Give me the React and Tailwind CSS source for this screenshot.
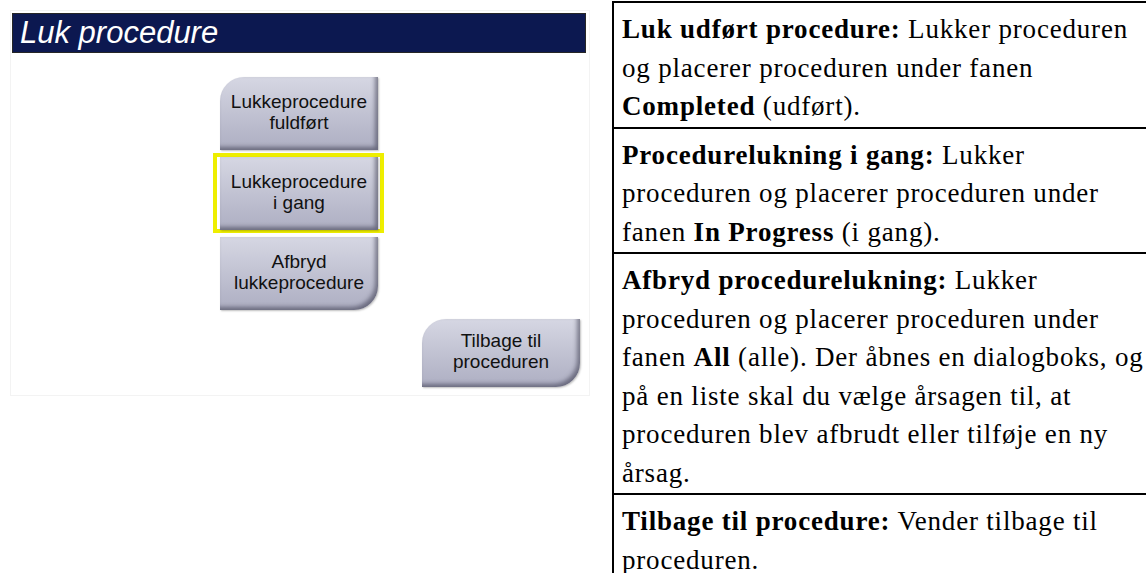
import React from "react";

const sans = { fontFamily: '"Liberation Sans", Arial, sans-serif' };
const serif = { fontFamily: '"Liberation Serif", "Times New Roman", serif' };

// grey-lilac console button, the corner that is rounded varies per button
const ProcButton = ({ lines, rounded, h = "h-[73px]" }) => (
  <div
    className={`w-[158px] ${h} flex flex-col items-center justify-center pb-[4px] bg-gradient-to-b from-[#d6d7e3] to-[#adaec2] shadow-[inset_-3px_-3px_4px_rgba(40,40,60,0.5),1px_1px_2px_rgba(0,0,0,0.25)] text-[19px] leading-[21px] text-[#111111] text-center ${rounded}`}
    style={sans}
  >
    {lines.map((l) => (
      <div key={l}>{l}</div>
    ))}
  </div>
);

const rows = [
  [
    [<b key="a">Luk udført procedure:</b>, " Lukker proceduren"],
    ["og placerer proceduren under fanen"],
    [<b key="a">Completed</b>, " (udført)."],
  ],
  [
    [<b key="a">Procedurelukning i gang:</b>, " Lukker"],
    ["proceduren og placerer proceduren under"],
    ["fanen ", <b key="a">In Progress</b>, " (i gang)."],
  ],
  [
    [<b key="a">Afbryd procedurelukning:</b>, " Lukker"],
    ["proceduren og placerer proceduren under"],
    ["fanen ", <b key="a">All</b>, " (alle). Der åbnes en dialogboks, og"],
    ["på en liste skal du vælge årsagen til, at"],
    ["proceduren blev afbrudt eller tilføje en ny"],
    ["årsag."],
  ],
  [
    [<b key="a">Tilbage til procedure:</b>, " Vender tilbage til"],
    ["proceduren."],
  ],
];

export default function App() {
  return (
    <div className="w-[1146px] h-[573px] bg-white overflow-hidden flex">
      {/* left: screen capture */}
      <div className="w-[612px] shrink-0 pt-[10px] pl-[10px]">
        <div className="w-[580px] h-[386px] border border-[#f3f3f3] pt-[2px] pl-[1px]">
          <div
            className="w-[574px] h-[40px] bg-[#0c1850] border border-[#262626] pl-[7px] text-white italic text-[31px] leading-[37px]"
            style={sans}
          >
            Luk procedure
          </div>
          <div className="ml-[208px] mt-[24px] flex flex-col">
            <ProcButton lines={["Lukkeprocedure", "fuldført"]} rounded="rounded-tl-[24px]" />
            <div className="-ml-[7px] mt-[3px] w-[171px] h-[80px] border-[4px] border-[#eeee00] pl-[3px] flex">
              <ProcButton lines={["Lukkeprocedure", "i gang"]} rounded="" />
            </div>
            <div className="mt-[4px]">
              <ProcButton lines={["Afbryd", "lukkeprocedure"]} rounded="rounded-br-[24px]" />
            </div>
            <div className="ml-[202px] mt-[9px]">
              <ProcButton lines={["Tilbage til", "proceduren"]} rounded="rounded-tl-[24px] rounded-br-[24px]" h="h-[68px]" />
            </div>
          </div>
        </div>
      </div>

      {/* right: description table */}
      <div
        className="w-[545px] shrink-0 mt-[1px] border-l-2 border-t-2 border-black text-black text-[27px] leading-[38.5px] tracking-[0.03em]"
        style={serif}
      >
        {rows.map((r, i) => (
          <div key={i} className={`pl-[8px] pt-[7px] pb-[1px] ${i < rows.length - 1 ? "border-b-2 border-black" : ""}`}>
            {r.map((line, j) => (
              <div key={j} className="whitespace-nowrap">
                {line}
              </div>
            ))}
          </div>
        ))}
      </div>
    </div>
  );
}
